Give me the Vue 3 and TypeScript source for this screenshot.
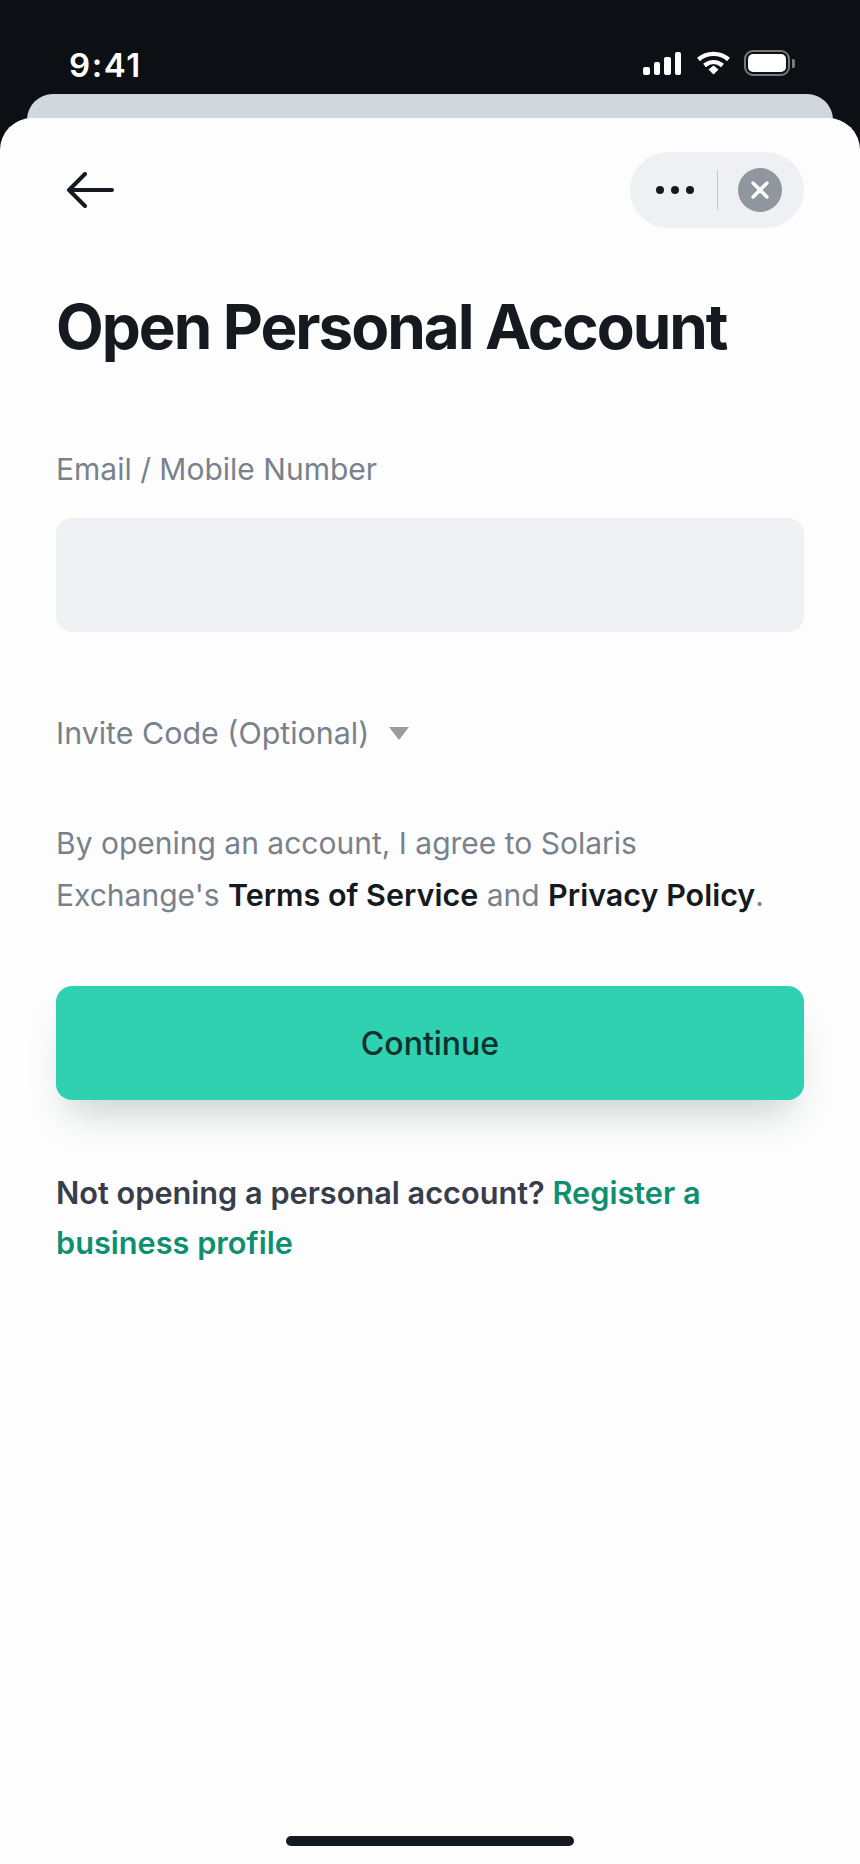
<script setup lang="ts">
const bars = [8, 13, 18, 23];
</script>

<template>
  <div class="phone">
    <div class="status">
      <span class="time">9:41</span>
      <div class="status-icons">
        <div class="signal">
          <i v-for="h in bars" :key="h" class="bar" :style="{ height: h + 'px' }"></i>
        </div>
        <svg class="wifi" width="33" height="24" viewBox="0 0 33 24" fill="none">
          <path d="M1.5 8.5C10 1 23 1 31.5 8.5" stroke="#fff" stroke-width="4.4" />
          <path d="M7.5 14.5C13 10 20 10 25.5 14.5" stroke="#fff" stroke-width="4.4" />
          <path d="M11.5 18.5 16.5 14.5 21.5 18.5 16.5 23.5Z" fill="#fff" />
        </svg>
        <div class="battery"><div class="battery-fill"></div></div>
        <div class="battery-cap"></div>
      </div>
    </div>
    <div class="back-card"></div>
    <main class="sheet">
      <div class="nav">
        <svg class="back" width="48" height="36" viewBox="0 0 48 36" fill="none">
          <path d="M46 18H3M19 2 3 18l16 16" stroke="#141a20" stroke-width="4" stroke-linecap="round" stroke-linejoin="round" />
        </svg>
        <div class="pill">
          <div class="dots"><i></i><i></i><i></i></div>
          <div class="divider"></div>
          <div class="close">
            <svg width="20" height="20" viewBox="0 0 20 20" fill="none">
              <path d="M3 3l14 14M17 3 3 17" stroke="#fff" stroke-width="3.4" stroke-linecap="round" />
            </svg>
          </div>
        </div>
      </div>

      <h1 class="title">Open Personal Account</h1>

      <label class="label">Email / Mobile Number</label>
      <div class="input"></div>

      <div class="invite">
        <span>Invite Code (Optional)</span>
        <i class="caret"></i>
      </div>

      <p class="terms">
        By opening an account, I agree to Solaris Exchange's
        <b>Terms of Service</b> and <b>Privacy Policy</b>.
      </p>

      <button class="continue">Continue</button>

      <p class="footer">
        Not opening a personal account? <a class="link">Register a business profile</a>
      </p>

      <div class="home"></div>
    </main>
  </div>
</template>

<style>
body {
  background: #0c1014;
}
</style>

<style scoped>
.phone {
  width: 860px;
  height: 1864px;
  display: flex;
  flex-direction: column;
  background: #0c1014;
  font-family: Inter, "Liberation Sans", sans-serif;
  overflow: hidden;
}
.status {
  height: 94px;
  flex-shrink: 0;
  display: flex;
  align-items: flex-start;
  justify-content: space-between;
  padding: 47px 65px 0 69px;
  box-sizing: border-box;
  color: #fff;
}
.time {
  font-size: 33px;
  line-height: 36px;
  font-weight: 600;
  letter-spacing: 1.6px;
}
.status-icons {
  display: flex;
  align-items: center;
  height: 30px;
  margin-top: 1px;
}
.signal {
  display: flex;
  align-items: flex-end;
  gap: 4px;
  height: 23px;
  margin-right: 16px;
}
.bar {
  width: 6.5px;
  background: #fff;
  border-radius: 2px;
}
.wifi {
  margin-right: 14px;
}
.battery {
  width: 38px;
  height: 18px;
  padding: 2px;
  box-sizing: content-box;
  border: 2px solid #77797c;
  border-radius: 9px;
}
.battery-fill {
  width: 100%;
  height: 100%;
  background: #fff;
  border-radius: 5px;
}
.battery-cap {
  width: 3px;
  height: 9px;
  margin-left: 2px;
  background: #77797c;
  border-radius: 0 2px 2px 0;
}
.back-card {
  height: 60px;
  margin: 0 27px -36px;
  flex-shrink: 0;
  background: #d2d7db;
  border-radius: 26px 26px 0 0;
}
.sheet {
  position: relative;
  flex: 1;
  display: flex;
  flex-direction: column;
  padding: 34px 56px 18px;
  background: #fdfdfd;
  border-radius: 32px 32px 0 0;
}
.nav {
  display: flex;
  align-items: center;
  justify-content: space-between;
  height: 76px;
}
.back {
  margin-left: 10px;
}
.pill {
  width: 174px;
  height: 76px;
  display: flex;
  align-items: center;
  box-sizing: border-box;
  padding-left: 26px;
  background: #eef0f3;
  border-radius: 38px;
}
.dots {
  display: flex;
  gap: 7px;
}
.dots i {
  width: 8px;
  height: 8px;
  background: #141a20;
  border-radius: 50%;
}
.divider {
  width: 1px;
  height: 40px;
  margin: 0 20px 0 23px;
  background: #c6cacf;
}
.close {
  width: 44px;
  height: 44px;
  display: flex;
  align-items: center;
  justify-content: center;
  background: #8f969e;
  border-radius: 50%;
}
.title {
  margin: 63px 0 0;
  font-size: 62px;
  line-height: 72px;
  font-weight: 700;
  letter-spacing: -2.05px;
  color: #141a20;
}
.label {
  margin-top: 86px;
  font-size: 30px;
  line-height: 40px;
  color: #79818b;
}
.input {
  height: 114px;
  margin-top: 29px;
  background: #eff1f4;
  border-radius: 16px;
}
.invite {
  display: flex;
  align-items: center;
  gap: 20px;
  margin-top: 81px;
  font-size: 30.4px;
  line-height: 40px;
  color: #79818b;
}
.caret {
  width: 0;
  height: 0;
  border-left: 10px solid transparent;
  border-right: 10px solid transparent;
  border-top: 13px solid #989ea6;
}
.terms {
  margin: 64px 0 0;
  font-size: 30px;
  line-height: 52px;
  color: #79818b;
}
.terms b {
  font-size: 30.5px;
  font-weight: 600;
  color: #141a20;
}
.continue {
  height: 114px;
  margin-top: 65px;
  border: none;
  border-radius: 16px;
  background: #2fd1b0;
  color: #10302e;
  font-family: inherit;
  font-size: 32px;
  font-weight: 500;
  box-shadow: 0 24px 36px -12px rgba(60, 80, 80, 0.25);
}
.footer {
  margin: 68px 0 0;
  font-size: 30.7px;
  line-height: 50px;
  font-weight: 600;
  color: #373d4a;
}
.link {
  color: #0f8f70;
}
.home {
  width: 288px;
  height: 10px;
  margin: auto auto 0;
  background: #141a20;
  border-radius: 5px;
}
</style>
